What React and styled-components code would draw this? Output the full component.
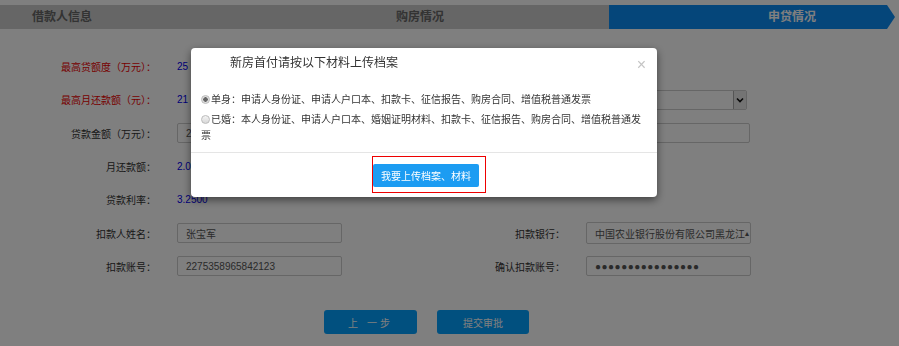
import React from 'react';
import styled, { createGlobalStyle, css } from 'styled-components';

const GlobalStyle = createGlobalStyle`
  html, body {
    margin: 0;
    padding: 0;
    background: #ffffff;
  }
  body {
    font-family: "Liberation Sans", "Noto Sans CJK SC", sans-serif;
  }
`;

const Page = styled.div`
  width: 899px;
  height: 346px;
  padding-top: 5px;
  box-sizing: border-box;
  background: #ffffff;
  overflow: hidden;
`;

const StepBar = styled.div`
  display: flex;
  width: 887px;
  height: 24px;
  background: #cccccc;
`;

const Step = styled.div`
  position: relative;
  width: ${(p) => p.$width}px;
  padding-left: ${(p) => p.$pad}px;
  box-sizing: border-box;
  font-size: 12px;
  font-weight: bold;
  line-height: 24px;
  color: #666666;

  ${(p) =>
    p.$active &&
    css`
      background: #0a8cf5;
      color: #ffffff;
      &::after {
        content: '';
        position: absolute;
        right: -8px;
        top: 0;
        border-top: 12px solid transparent;
        border-bottom: 12px solid transparent;
        border-left: 8px solid #0a8cf5;
      }
    `}
`;

const Form = styled.div`
  margin-top: 21px;
  display: flex;
  flex-direction: column;
`;

const Row = styled.div`
  display: flex;
  align-items: center;
  height: 33.3px;
`;

const Cell = styled.div`
  display: flex;
  align-items: center;
  width: ${(p) => p.$width}px;
`;

const Label = styled.div`
  width: ${(p) => p.$width}px;
  margin-right: ${(p) => p.$gap}px;
  text-align: right;
  font-size: 10px;
  color: ${(p) => (p.$red ? '#ee0000' : '#333333')};
  white-space: nowrap;
`;

const Value = styled.div`
  font-size: 10px;
  color: #0000ee;
`;

const Input = styled.div`
  display: flex;
  align-items: center;
  width: ${(p) => p.$width || 165}px;
  height: ${(p) => p.$height || 20}px;
  padding: 0 8px;
  box-sizing: border-box;
  border: 1px solid #cccccc;
  border-radius: 2px;
  background: #ffffff;
  font-size: 10px;
  color: #555555;
  white-space: nowrap;
  overflow: hidden;
  letter-spacing: ${(p) => (p.$dots ? '0.5px' : '0')};
`;

const SelectBox = styled(Input)`
  justify-content: flex-end;
  padding-right: 0;
`;

const BankSelect = styled(Input)`
  justify-content: space-between;
  padding-right: 2px;
`;

const SelectArrow = styled.span`
  display: flex;
  align-items: center;
  justify-content: center;
  width: 12px;
  height: 18px;
  border-left: 1px solid #aaaaaa;
  background: #e8e8e8;
`;

const Caret = styled.span`
  font-size: 8px;
  color: #555555;
`;

const Actions = styled.div`
  display: flex;
  gap: 20px;
  margin-top: 27px;
  padding-left: 324px;
`;

const ActionButton = styled.button`
  width: ${(p) => p.$width}px;
  height: 24px;
  border: none;
  border-radius: 3px;
  background: #03a0ff;
  color: #ffffff;
  font-family: inherit;
  font-size: 10px;
  letter-spacing: ${(p) => p.$spacing || 0}px;
`;

const Overlay = styled.div`
  position: fixed;
  inset: 0;
  background: rgba(0, 0, 0, 0.5);
`;

const Modal = styled.div`
  position: fixed;
  left: 191px;
  top: 48px;
  width: 466px;
  background: #ffffff;
  border-radius: 4px;
  box-shadow: 0 3px 8px rgba(0, 0, 0, 0.5);
`;

const ModalHeader = styled.div`
  position: relative;
  height: 32px;
  padding-left: 39px;
  box-sizing: border-box;
  font-size: 12px;
  line-height: 31px;
  color: #333333;
`;

const Close = styled.span`
  position: absolute;
  right: 11px;
  top: 9px;
  font-size: 16px;
  line-height: 16px;
  color: #c4c4c4;
`;

const ModalBody = styled.div`
  padding: 12px 9px 8px 10px;
  display: flex;
  flex-direction: column;
  gap: 4px;
`;

const Option = styled.div`
  font-size: 10px;
  line-height: 16px;
  color: #333333;
`;

const Radio = styled.span`
  display: inline-block;
  width: 7px;
  height: 7px;
  margin-right: 1px;
  border: 1px solid #bbbbbb;
  border-radius: 50%;
  background: ${(p) =>
    p.$checked
      ? 'radial-gradient(circle, #666666 0 2px, #e0e0e0 2.5px)'
      : 'linear-gradient(#f4f4f4, #d8d8d8)'};
  vertical-align: -1px;
`;

const ModalFooter = styled.div`
  display: flex;
  justify-content: center;
  padding: 3px 0 4px;
  border-top: 1px solid #e5e5e5;
`;

const Highlight = styled.div`
  margin-left: 10px;
  padding: 7px 6px 5px 0;
  border: 1px solid #ee0000;
`;

const UploadButton = styled.button`
  display: block;
  width: 106px;
  height: 23px;
  border: none;
  border-radius: 2px;
  background: #1c9cf2;
  color: #ffffff;
  font-family: inherit;
  font-size: 10px;
  padding: 0;
`;

const ChevronDown = () => (
  <svg width="8" height="6" viewBox="0 0 8 6">
    <path d="M1 1.5 L4 4.5 L7 1.5" fill="none" stroke="#111" strokeWidth="1.6" />
  </svg>
);

export default function App() {
  return (
    <>
      <GlobalStyle />
      <Page>
        <StepBar>
          <Step $width={305} $pad={32}>借款人信息</Step>
          <Step $width={304} $pad={91}>购房情况</Step>
          <Step $width={278} $pad={159} $active>申贷情况</Step>
        </StepBar>

        <Form>
          <Row>
            <Cell $width={400}>
              <Label $width={156} $gap={21} $red>最高贷额度（万元）：</Label>
              <Value>25</Value>
            </Cell>
          </Row>
          <Row>
            <Cell $width={400}>
              <Label $width={156} $gap={21} $red>最高月还款额（元）：</Label>
              <Value>21</Value>
            </Cell>
            <Cell $width={360}>
              <Label $width={165} $gap={21} />
              <SelectBox $width={161}>
                <SelectArrow><ChevronDown /></SelectArrow>
              </SelectBox>
            </Cell>
          </Row>
          <Row>
            <Cell $width={400}>
              <Label $width={156} $gap={21}>贷款金额（万元）：</Label>
              <Input>25</Input>
            </Cell>
            <Cell $width={360}>
              <Label $width={165} $gap={21} />
              <Input $width={164} />
            </Cell>
          </Row>
          <Row>
            <Cell $width={400}>
              <Label $width={156} $gap={21}>月还款额：</Label>
              <Value>2.0</Value>
            </Cell>
          </Row>
          <Row>
            <Cell $width={400}>
              <Label $width={156} $gap={21}>贷款利率：</Label>
              <Value>3.2500</Value>
            </Cell>
          </Row>
          <Row>
            <Cell $width={400}>
              <Label $width={156} $gap={21}>扣款人姓名：</Label>
              <Input>张宝军</Input>
            </Cell>
            <Cell $width={360}>
              <Label $width={165} $gap={21}>扣款银行：</Label>
              <BankSelect $height={22}>
                <span>中国农业银行股份有限公司黑龙江</span>
                <Caret>▴</Caret>
              </BankSelect>
            </Cell>
          </Row>
          <Row>
            <Cell $width={400}>
              <Label $width={156} $gap={21}>扣款账号：</Label>
              <Input>2275358965842123</Input>
            </Cell>
            <Cell $width={360}>
              <Label $width={165} $gap={21}>确认扣款账号：</Label>
              <Input $dots>●●●●●●●●●●●●●●●●</Input>
            </Cell>
          </Row>
        </Form>

        <Actions>
          <ActionButton $width={93} $spacing={3}>上 一步</ActionButton>
          <ActionButton $width={92}>提交审批</ActionButton>
        </Actions>
      </Page>

      <Overlay />

      <Modal>
        <ModalHeader>
          新房首付请按以下材料上传档案
          <Close>×</Close>
        </ModalHeader>
        <ModalBody>
          <Option>
            <Radio $checked />单身：申请人身份证、申请人户口本、扣款卡、征信报告、购房合同、增值税普通发票
          </Option>
          <Option>
            <Radio />已婚：本人身份证、申请人户口本、婚姻证明材料、扣款卡、征信报告、购房合同、增值税普通发票
          </Option>
        </ModalBody>
        <ModalFooter>
          <Highlight>
            <UploadButton>我要上传档案、材料</UploadButton>
          </Highlight>
        </ModalFooter>
      </Modal>
    </>
  );
}
